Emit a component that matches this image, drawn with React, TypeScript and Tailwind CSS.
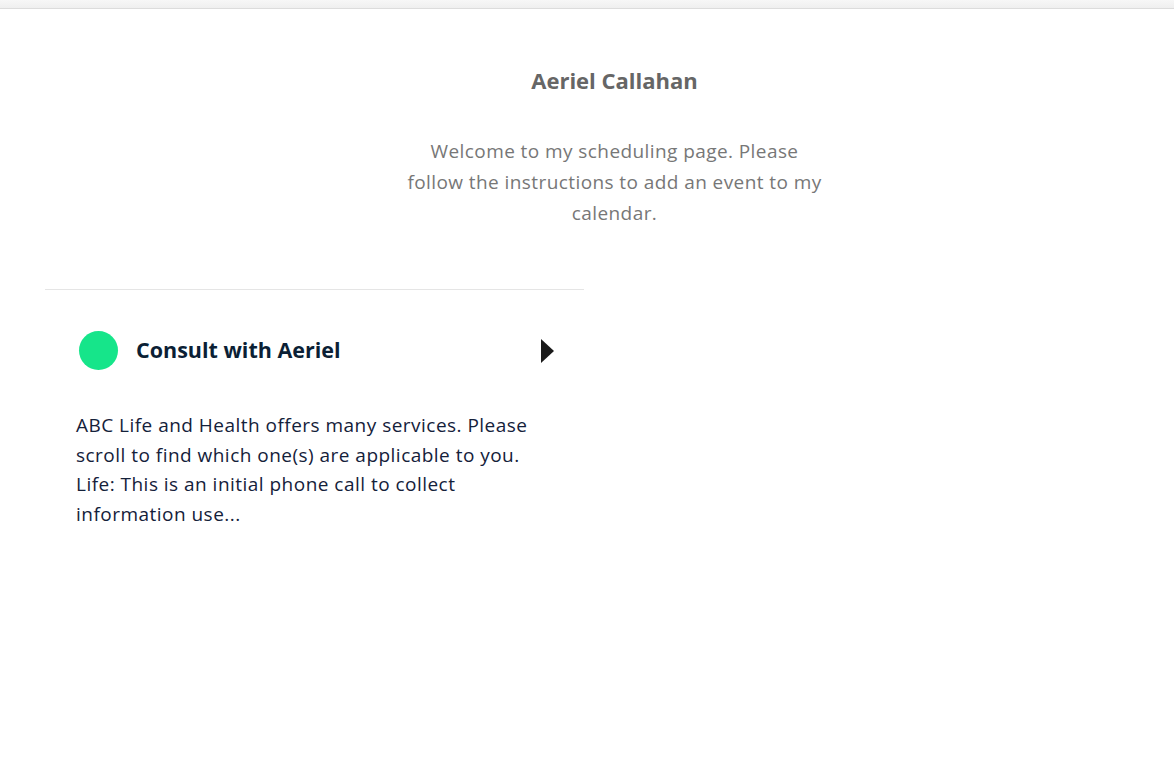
export default function App() {
  return (
    <div
      className="min-h-[769px] w-full bg-white"
      style={{ fontFamily: '"Open Sans", "Liberation Sans", sans-serif' }}
    >
      <div className="h-[9px] w-full border-b border-[#dcdcdc] bg-gradient-to-b from-[#f7f7f7] to-[#efefef]" />

      <header className="pl-[55px] pt-[57px] text-center">
        <h1 className="text-[22px] font-bold leading-[28px] text-[#666666]">Aeriel Callahan</h1>
        <p className="mx-auto mt-[42px] w-[440px] text-[19px] leading-[31px] tracking-[0.022em] text-[#777777]">
          Welcome to my scheduling page. Please
          <br />
          follow the instructions to add an event to my
          <br />
          calendar.
        </p>
      </header>

      <section className="ml-[45px] mt-[60px] w-[539px] border-t border-[#e5e5e5]">
        <div className="flex items-center pl-[34px] pr-[30px] pt-[41px]">
          <span className="h-[39px] w-[39px] rounded-full bg-[#16e58a]" />
          <h2 className="ml-[18px] flex-1 text-[21.5px] font-bold text-[#0b1f35]">Consult with Aeriel</h2>
          <svg width="13" height="24" viewBox="0 0 13 24" className="text-[#1a1a1a]">
            <path d="M0 0 L13 12 L0 24 Z" fill="currentColor" />
          </svg>
        </div>
        <p className="mt-[41px] pl-[31px] text-[19px] leading-[29.5px] tracking-[0.025em] text-[#14213a]">
          ABC Life and Health offers many services. Please
          <br />
          scroll to find which one(s) are applicable to you.
          <br />
          Life: This is an initial phone call to collect
          <br />
          information use...
        </p>
      </section>
    </div>
  );
}
